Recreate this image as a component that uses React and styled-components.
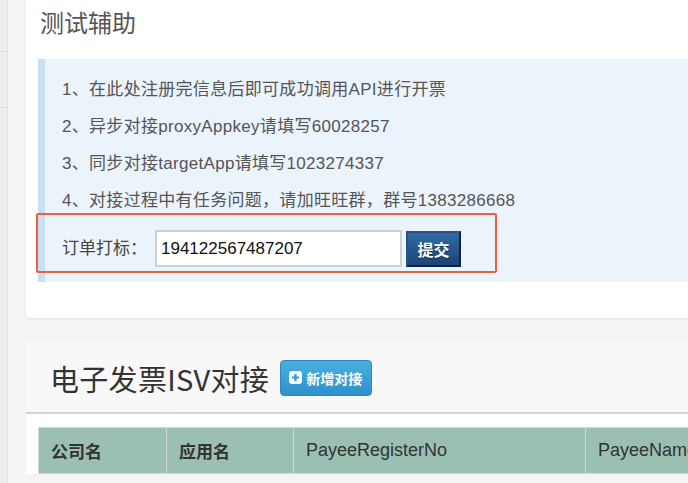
import React, { useState } from 'react';
import styled, { createGlobalStyle } from 'styled-components';

const GlobalStyle = createGlobalStyle`
  html, body {
    margin: 0;
    padding: 0;
    background: #f4f4f4;
    font-family: "Liberation Sans", "Noto Sans CJK SC", sans-serif;
    color: #555;
  }
  * { box-sizing: border-box; }
`;

const Page = styled.div`
  display: flex;
  width: 688px;
  height: 483px;
  overflow: hidden;
`;

const Sidebar = styled.div`
  width: 8px;
  flex-shrink: 0;
  background: #eeeeee;
  border-right: 1px solid #e2e2e2;
  display: flex;
  flex-direction: column;
`;

const SideItem = styled.div`
  height: ${p => p.h}px;
  border-bottom: 1px solid #dcdcdc;
`;

const Main = styled.div`
  flex: 1;
  padding-left: 18px;
  min-width: 0;
`;

const Card = styled.section`
  background: #fff;
  border-radius: 0 0 5px 5px;
  box-shadow: 0 1px 3px rgba(0, 0, 0, 0.08);
  padding: 6px 0 36px 12px;
  margin-right: -20px;
`;

const CardTitle = styled.h2`
  margin: 0 0 21px 2px;
  font-family: "Noto Sans CJK SC", sans-serif;
  font-size: 24px;
  line-height: 32px;
  font-weight: normal;
  color: #555;
`;

const InfoBox = styled.div`
  background: #ebf3fb;
  border-left: 7px solid #cadff0;
  padding: 12px 0 9px 17px;
`;

const TipList = styled.div`
  font-size: 17px;
  line-height: 37px;
  letter-spacing: 0.3px;
  color: #555;
`;

const FormRow = styled.div`
  margin: -6px 0 0 -26px;
  width: 461px;
  height: 60px;
  border: 2px solid #e8604c;
  border-radius: 2px;
  padding: 11px 0 0 24px;
  display: flex;
  align-items: center;
`;

const Label = styled.label`
  font-size: 17px;
  color: #444;
  width: 93px;
  height: 37px;
  line-height: 37px;
  flex-shrink: 0;
`;

const OrderInput = styled.input`
  width: 247px;
  height: 37px;
  border: 2px solid #cfcfcf;
  background: #fff;
  padding: 0 4px;
  font-family: "Liberation Sans", Arial, sans-serif;
  font-size: 17px;
  color: #111;
  outline: none;
`;

const SubmitButton = styled.button`
  margin-left: 4px;
  width: 55px;
  height: 36px;
  border: 2px solid #0f2540;
  border-top-color: #2b5183;
  border-left-color: #2b5183;
  background: linear-gradient(#326aa5, #1c4478);
  color: #fff;
  font-family: "Noto Sans CJK SC", sans-serif;
  font-size: 16px;
  font-weight: bold;
  text-shadow: 0 1px 1px rgba(0, 0, 0, 0.5);
  padding: 0;
  cursor: pointer;
`;

const Panel = styled.section`
  margin-top: 25px;
  margin-right: -40px;
  background: #fff;
`;

const PanelHead = styled.div`
  background: #f8f8f8;
  border-bottom: 2px solid #d4d4d4;
  height: 71px;
  display: flex;
  align-items: center;
  padding: 0 0 0 24px;
  gap: 11px;
`;

const PanelTitle = styled.h2`
  margin: 0;
  font-family: "Noto Sans CJK SC", sans-serif;
  font-size: 29px;
  font-weight: normal;
  color: #333;
  line-height: 36px;
  letter-spacing: 0.3px;
`;

const AddButton = styled.button`
  height: 36px;
  padding: 0 9px 0 8px;
  display: flex;
  align-items: center;
  gap: 4px;
  border: 1px solid #2c88bd;
  border-radius: 4px;
  background: linear-gradient(#47b0e2, #2f92ca);
  color: #fff;
  font-family: "Noto Sans CJK SC", sans-serif;
  font-size: 14px;
  font-weight: bold;
  cursor: pointer;
`;

const TableWrap = styled.div`
  padding: 13px 0 0 12px;
`;

const Table = styled.table`
  border-collapse: collapse;
  width: 720px;
`;

const Th = styled.th`
  width: ${p => p.w}px;
  height: 46px;
  background: #9bc0b2;
  border: 1px solid #d6d6d6;
  text-align: left;
  padding: 0 12px;
  font-size: ${p => (p.latin ? 18 : 17)}px;
  font-weight: ${p => (p.latin ? 'normal' : 'bold')};
  color: #333;
  font-family: ${p => (p.latin ? '"Liberation Sans", sans-serif' : '"Noto Sans CJK SC", sans-serif')};
`;

const PlusIcon = () => (
  <svg width="13" height="13" viewBox="0 0 13 13">
    <rect x="0" y="0" width="13" height="13" rx="3" fill="#fff" />
    <path d="M6.5 3v7M3 6.5h7" stroke="#3298cf" strokeWidth="2.2" />
  </svg>
);

const tips = [
  '1、在此处注册完信息后即可成功调用API进行开票',
  '2、异步对接proxyAppkey请填写60028257',
  '3、同步对接targetApp请填写1023274337',
  '4、对接过程中有任务问题，请加旺旺群，群号1383286668',
];

const App = () => {
  const [order, setOrder] = useState('194122567487207');

  return (
    <>
      <GlobalStyle />
      <Page>
        <Sidebar>
          <SideItem h={52} />
          <SideItem h={56} />
        </Sidebar>
        <Main>
          <Card>
            <CardTitle>测试辅助</CardTitle>
            <InfoBox>
              <TipList>
                {tips.map(t => <div key={t}>{t}</div>)}
              </TipList>
              <FormRow>
                <Label htmlFor="order">订单打标：</Label>
                <OrderInput id="order" value={order} onChange={e => setOrder(e.target.value)} />
                <SubmitButton type="button">提交</SubmitButton>
              </FormRow>
            </InfoBox>
          </Card>

          <Panel>
            <PanelHead>
              <PanelTitle>电子发票ISV对接</PanelTitle>
              <AddButton type="button"><PlusIcon />新增对接</AddButton>
            </PanelHead>
            <TableWrap>
              <Table>
                <thead>
                  <tr>
                    <Th w={128}>公司名</Th>
                    <Th w={127}>应用名</Th>
                    <Th w={292} latin>PayeeRegisterNo</Th>
                    <Th latin>PayeeName</Th>
                  </tr>
                </thead>
              </Table>
            </TableWrap>
          </Panel>
        </Main>
      </Page>
    </>
  );
};

export default App;
